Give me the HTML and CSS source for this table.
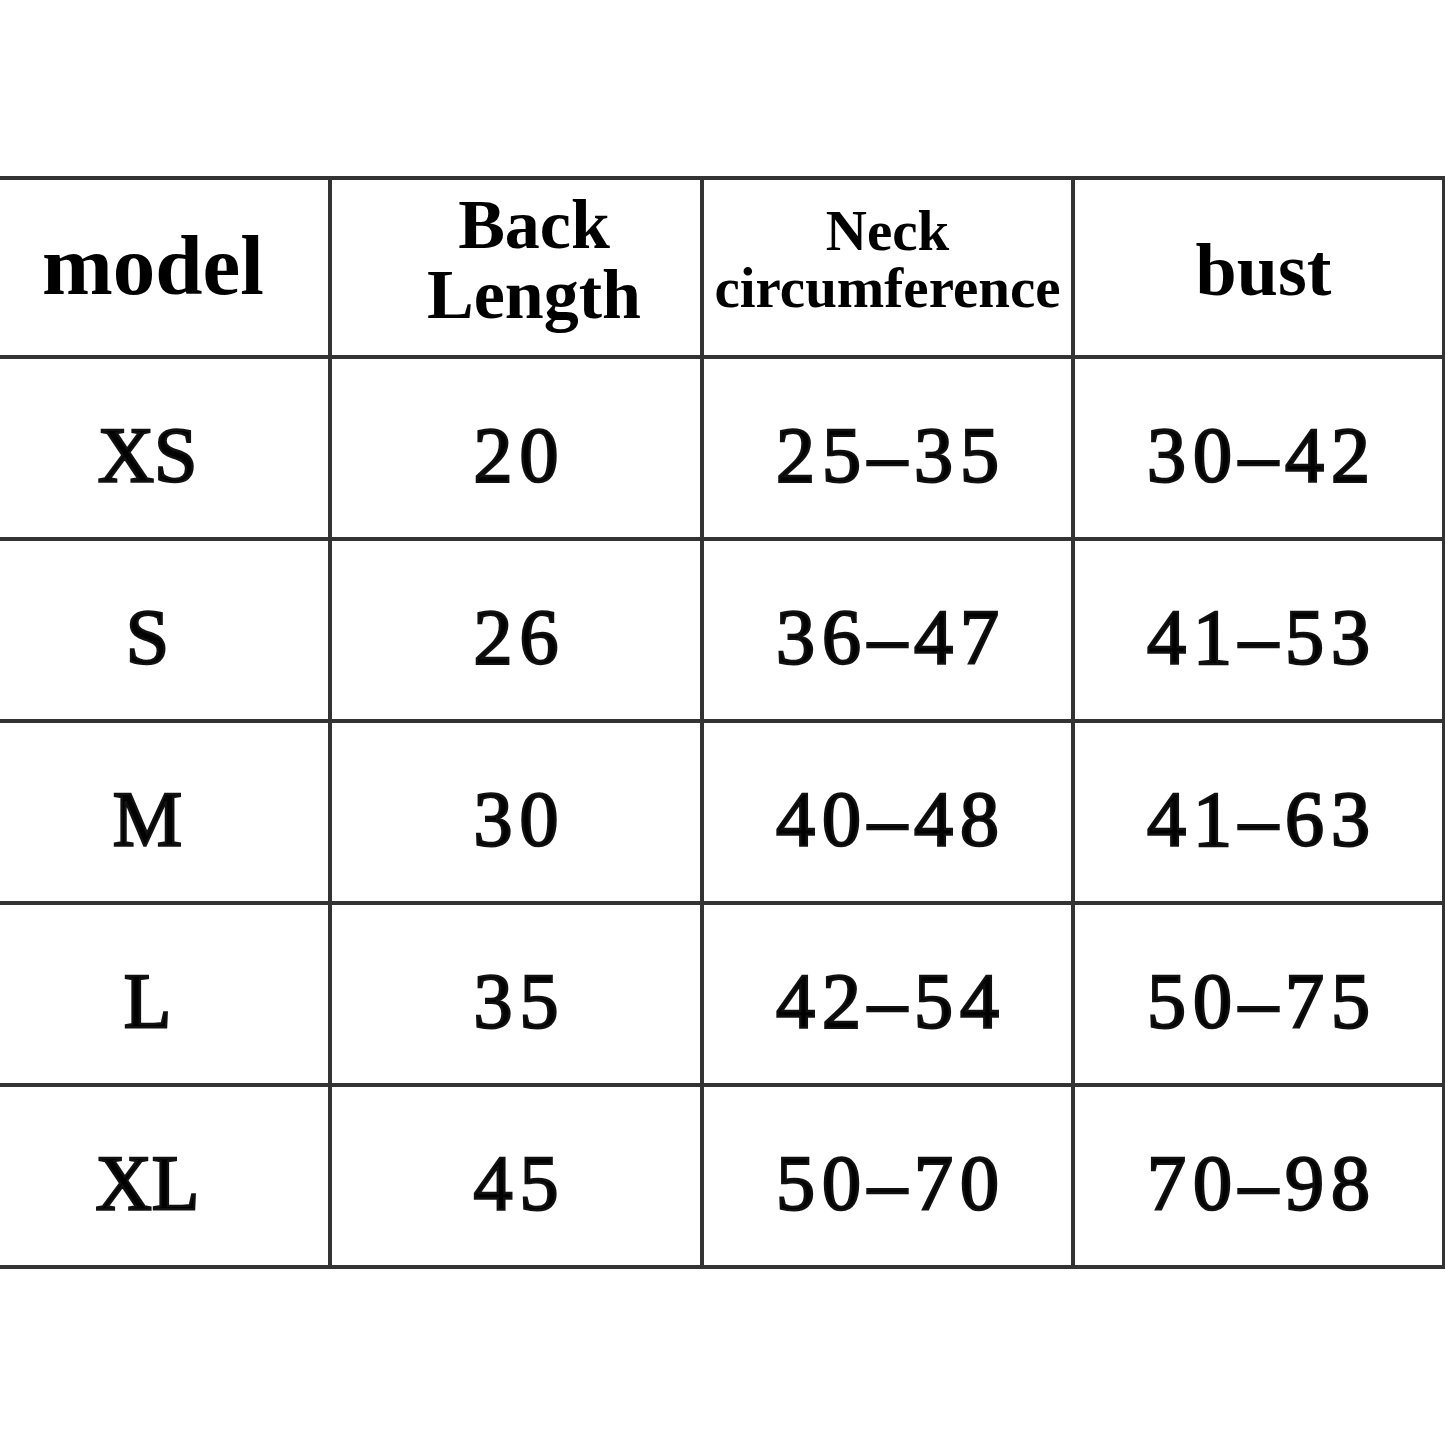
FILE: index.html
```html
<!DOCTYPE html>
<html>
<head>
<meta charset="utf-8">
<link rel="stylesheet" href="styles.css">
</head>
<body>
<div class="page">
  <table class="size-table">
    <colgroup>
      <col class="c1"><col class="c2"><col class="c3"><col class="c4">
    </colgroup>
    <thead>
      <tr>
        <th class="first model">model</th>
        <th class="back">Back<br>Length</th>
        <th class="neck">Neck<br>circumference</th>
        <th class="bust">bust</th>
      </tr>
    </thead>
    <tbody>
      <tr><td class="first">XS</td><td>20</td><td>25–35</td><td>30–42</td></tr>
      <tr><td class="first">S</td><td>26</td><td>36–47</td><td>41–53</td></tr>
      <tr><td class="first">M</td><td>30</td><td>40–48</td><td>41–63</td></tr>
      <tr><td class="first">L</td><td>35</td><td>42–54</td><td>50–75</td></tr>
      <tr><td class="first">XL</td><td>45</td><td>50–70</td><td>70–98</td></tr>
    </tbody>
  </table>
</div>
</body>
</html>
```

FILE: styles.css
```css
html, body {
  margin: 0;
  padding: 0;
  background: #ffffff;
}
.page {
  padding-top: 176px;
  width: 1445px;
}
.size-table {
  border-collapse: collapse;
  table-layout: fixed;
  width: 1444px;
  font-family: "Liberation Serif", "Times New Roman", serif;
  color: #000;
}
.c1 { width: 330px; }
.c2 { width: 372px; }
.c3 { width: 371px; }
.c4 { width: 371px; }
.size-table th,
.size-table td {
  border: 4px solid #333;
  text-align: center;
  vertical-align: middle;
  padding: 0;
  box-sizing: border-box;
}
.size-table .first {
  border-left: none;
}
.size-table th {
  height: 179px;
  font-weight: bold;
}
.size-table td {
  height: 182px;
  font-size: 78px;
  font-weight: normal;
  letter-spacing: 7px;
  -webkit-text-stroke: 2.4px #111;
  padding-top: 14px;
  padding-left: 7px;
}
.size-table td.first {
  padding-right: 40px;
  letter-spacing: 0;
}
.size-table th.model {
  font-size: 85px;
  line-height: 1;
  padding-right: 22px;
  padding-bottom: 4px;
}
.size-table th.back {
  font-size: 70px;
  line-height: 70px;
  padding-left: 36px;
  padding-bottom: 16px;
}
.size-table th.neck {
  font-size: 57px;
  line-height: 57px;
  padding-bottom: 18px;
}
.size-table th.bust {
  font-size: 74px;
  line-height: 1;
  padding-left: 10px;
  padding-top: 4px;
}
```
